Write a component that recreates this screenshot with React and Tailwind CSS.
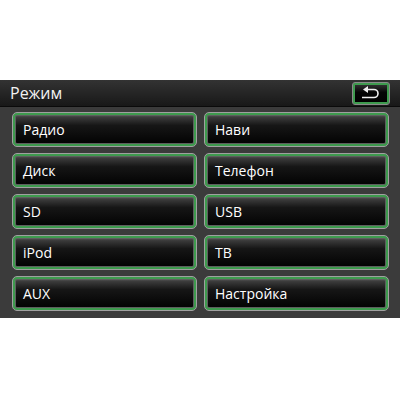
import React from 'react';

const items = [
  ['Радио', 'Нави'],
  ['Диск', 'Телефон'],
  ['SD', 'USB'],
  ['iPod', 'ТВ'],
  ['AUX', 'Настройка'],
];

function ModeButton({ label }) {
  return (
    <div className="h-[35px] rounded-[5px] border border-[#a0a0a0] bg-[linear-gradient(to_bottom,#6a6a6a_0%,#3a3a3a_14%,#161616_38%,#000_100%)] shadow-[inset_0_0_0_1px_#3e9a4e,inset_0_0_0_2px_#3e9a4e,inset_0_0_0_3px_#5e5e5e] flex items-center pl-[10px] text-white text-[14px] font-medium">
      {label}
    </div>
  );
}

export default function App() {
  return (
    <div className="w-[400px] h-[400px] bg-white font-['Open_Sans',sans-serif]">
      <div className="h-[80px]" />
      {/* Header */}
      <div className="h-[27px] flex items-center justify-between bg-[linear-gradient(to_bottom,#333,#181818)] border-b border-[#0a0a0a]">
        <div className="pl-[10px] text-[#f2f2f2] text-[16px] leading-none">Режим</div>
        <div className="mr-[10px] w-[38px] h-[23px] rounded-[3px] border border-[#8a8a8a] bg-[linear-gradient(to_bottom,#3a3a3a,#050505_45%,#000)] shadow-[inset_0_0_0_1px_#3e9a4e,inset_0_0_0_2px_#3e9a4e] flex items-center justify-center">
          <svg width="24" height="16" viewBox="0 0 24 16" fill="none">
            <path d="M8 4.5h7a4 4 0 0 1 0 8H3" stroke="#f0f0f0" strokeWidth="1.6" />
            <path d="M4 4.5l5-3.5v7z" fill="#f0f0f0" />
          </svg>
        </div>
      </div>
      {/* Mode grid */}
      <div className="bg-[#3b3b3b] pt-[5px] pb-[7px] pl-[12px] pr-[11px] grid grid-cols-2 gap-x-[7px] gap-y-[6px]">
        {items.map(([a, b]) => (
          <React.Fragment key={a}>
            <ModeButton label={a} />
            <ModeButton label={b} />
          </React.Fragment>
        ))}
      </div>
    </div>
  );
}
